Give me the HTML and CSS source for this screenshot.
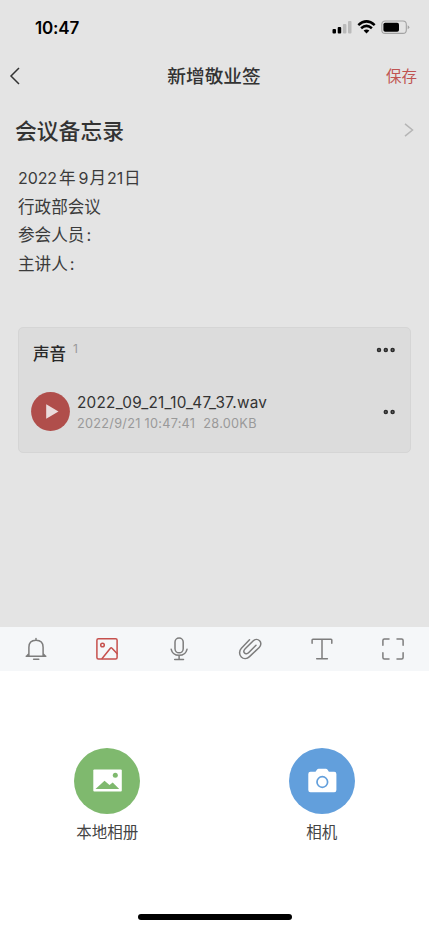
FILE: index.html
```html
<!DOCTYPE html>
<html lang="zh-CN">
<head>
<meta charset="utf-8">
<meta name="viewport" content="width=device-width, initial-scale=1">
<title>新增敬业签</title>
<link rel="stylesheet" href="styles.css">
</head>
<body>
<div class="phone">
  <main class="editor">
    <div class="status">
      <span class="time">10:47</span>
      <svg class="signals" width="78" height="16" viewBox="0 0 78 16">
        <rect x="0.5" y="9" width="3.5" height="4.5" rx="1"/>
        <rect x="5.7" y="7" width="3.5" height="6.5" rx="1"/>
        <rect x="10.9" y="4" width="3.5" height="9.5" rx="1" fill="#bababa"/>
        <rect x="16" y="1" width="3.5" height="12.5" rx="1" fill="#bababa"/>
        <g fill="none" stroke="#000" stroke-width="2.5">
          <path d="M26.3 5.1Q34.5 -2.3 42.7 5.1"/>
          <path d="M29.1 8.3Q34.5 3.5 39.9 8.3"/>
        </g>
        <path d="M31.6 10.6Q34.5 8.2 37.4 10.6L34.5 13.6Z"/>
        <rect x="49.8" y="1" width="24.5" height="12.4" rx="3.4" fill="none" stroke="#a2a2a2" stroke-width="1.1"/>
        <rect x="51.4" y="2.7" width="15.6" height="9" rx="1.8"/>
        <path d="M75.7 5.2Q79 7.2 75.7 9.2Z" fill="#a2a2a2"/>
      </svg>
    </div>
    <header class="nav">
      <svg class="back" width="12" height="18" viewBox="0 0 12 18"><path d="M10 1L2 9l8 8"/></svg>
      <h1>新增敬业签</h1>
      <span class="save">保存</span>
    </header>
    <div class="subject">
      <h2>会议备忘录</h2>
      <svg class="more" width="10" height="14" viewBox="0 0 10 14"><path d="M1 .8L8.5 7 1 13.2"/></svg>
    </div>
    <div class="note">
      <p><span class="num">2022</span><span class="year">年</span><span class="num">9</span><span class="month">月</span><span class="num">21</span><span class="day">日</span></p>
      <p>行政部会议</p>
      <p>参会人员<span class="colon">:</span></p>
      <p>主讲人<span class="colon">:</span></p>
    </div>
    <section class="card">
      <div class="card-head">
        <h3>声音</h3><span class="count">1</span>
        <svg class="dots" width="20" height="6" viewBox="0 0 20 6"><circle cx="3" cy="3" r="1.5"/><circle cx="9.8" cy="3" r="1.5"/><circle cx="16.6" cy="3" r="1.5"/></svg>
      </div>
      <div class="file">
        <svg class="play" width="39" height="39" viewBox="0 0 39 39"><circle cx="19.5" cy="19.5" r="19.4" fill="#b04e4b"/><path d="M15.2 12.2v14.6l12.3-7.3z" fill="#eadcdc"/></svg>
        <div class="meta">
          <div class="name">2022_09_21_10_47_37.wav</div>
          <div class="info"><span>2022/9/21 10:47:41</span><span>28.00KB</span></div>
        </div>
        <svg class="dots" width="20" height="6" viewBox="0 0 20 6"><circle cx="9.8" cy="3" r="1.5"/><circle cx="16.6" cy="3" r="1.5"/></svg>
      </div>
    </section>
  </main>
  <nav class="tools">
    <svg viewBox="0 0 24 24"><path d="M2.2 19.3h19.6M4.9 19V10.2Q4.9 3.2 12 3.2t7.1 7V19M12 3.2V1.5M4.9 16.8L2.5 19.3M19.1 16.8l2.4 2.5M9.6 22.2h5.2"/></svg>
    <svg class="active" viewBox="0 0 24 24"><rect x="1.9" y="1.8" width="20.2" height="20.2" rx="1.5"/><circle cx="7.5" cy="8" r="1.8"/><path d="M7.1 21.5l8.3-10.3q.8-.8 1.6 0l5 5.4"/></svg>
    <svg viewBox="0 0 24 24"><rect x="8" y="1" width="8.2" height="14.8" rx="4.1"/><path d="M4.2 12.3q1.4 6 7.9 6t7.9-6M12.1 18.3v4M7.7 22.4h8.8"/></svg>
    <svg viewBox="0 0 24 24"><path d="M11.5 2.8L3.4 11.3C1 13.8 1 17.8 3.3 20s5.8 1.9 8.2-.4L21.2 10.500c2-1.900 2.200-5 .4-6.800s-4.500-1.700-6.300.1L7.200 11.800c-1.500 1.500-1.700 3.200-.7 4.300s2.800.9 4.300-.6l7.200-7.200"/></svg>
    <svg viewBox="0 0 24 24"><path d="M2.1 6.2V3Q2.1 2.2 2.9 2.2H21Q21.8 2.2 21.8 3V6.2M12 2.2V21.8M6.7 21.8h10.7"/></svg>
    <svg viewBox="0 0 24 24"><path d="M1.9 8.2V3.5Q1.9 2 3.4 2H8M16 2h4.6Q22.1 2 22.1 3.5V8.2M22.1 15.8v4.6Q22.1 21.9 20.6 21.9H16M8 21.9H3.4Q1.9 21.9 1.9 20.4V15.8"/></svg>
  </nav>
  <section class="sources">
    <div class="source">
      <svg width="66" height="66" viewBox="0 0 66 66"><circle cx="33" cy="33" r="33" fill="#7fb96e"/><rect x="19.3" y="21.5" width="28.5" height="22" rx="1" fill="#fff"/><circle cx="41.3" cy="27.3" r="2.5" fill="#7fb96e"/><path d="M21.5 41l9-8.2 5 4.3 3.2-2.7 6.5 6.6z" fill="#7fb96e"/></svg>
      <span>本地相册</span>
    </div>
    <div class="source">
      <svg width="66" height="66" viewBox="0 0 66 66"><circle cx="33" cy="33" r="33" fill="#629fdc"/><path d="M21.5 23.7h5l1.6-2.2q.6-.8 1.5-.8h7.3q.9 0 1.5.8l1.5 2.2h5.3q2.2 0 2.2 2.2v16.2q0 2.2-2.2 2.2H21.5q-2.2 0-2.2-2.2V25.9q0-2.2 2.2-2.2z" fill="#fff"/><circle cx="33.3" cy="34" r="5.3" fill="#fff" stroke="#629fdc" stroke-width="1.7"/></svg>
      <span>相机</span>
    </div>
  </section>
  <div class="home"></div>
</div>
</body>
</html>
```
FILE: styles.css
```css
* { box-sizing: border-box; }
body { margin: 0; background: #fff; font-family: Inter, "Noto Sans CJK SC", sans-serif; color: #333; }
h1, h2, h3, p { margin: 0; }
svg { display: block; flex: none; }
.phone { width: 429px; height: 930px; display: flex; flex-direction: column; overflow: hidden; }
.editor { height: 627px; background: #e4e4e4; flex: none; }
.status { height: 52px; display: flex; justify-content: space-between; align-items: center; padding: 3px 19px 0 35px; color: #000; }
.time { font-size: 17px; font-weight: 600; letter-spacing: -.15px; line-height: 20px; }
.nav { height: 48px; display: grid; grid-template-columns: 60px 1fr 60px; align-items: center; padding: 0 12px 0 9px; }
.back { fill: none; stroke: #333; stroke-width: 1.5; }
h1 { font-size: 18.7px; font-weight: 500; text-align: center; line-height: 28px; white-space: nowrap; padding: 2px 0 0 2px; }
.save { color: #c05452; font-size: 15.5px; text-align: right; line-height: 22px; padding-top: 2px; }
.subject { height: 60px; display: flex; align-items: center; justify-content: space-between; padding: 0 15px; }
h2 { font-size: 21.8px; font-weight: 500; line-height: 32px; padding-top: 1px; }
.more { fill: none; stroke: #b5b5b5; stroke-width: 1.5; }
.note { padding: 4px 18px 0; font-size: 16.6px; color: #3b3b3b; height: 167px; }
.note p { height: 28.7px; line-height: 28.7px; display: flex; }
.num { font-size: 16px; letter-spacing: -.1px; }
.year { margin: 0 3px 0 2px; }
.month { margin: 0 1px; }
.day { margin-left: 1px; }
.colon { margin-left: 2px; }
.card { margin: 0 18px; height: 126px; border: 1px solid #d5d5d5; border-radius: 5px; background: #dcdcdc; padding: 0 14px 0 12px; }
.card-head { height: 51px; display: flex; align-items: center; padding-left: 2px; }
h3 { font-size: 16.5px; font-weight: 500; color: #292929; line-height: 24px; }
.count { font-size: 12px; color: #999; margin: -10px auto 0 7px; }
.card-head .dots { margin-top: -7px; }
.dots { fill: #777; stroke: #2b2b2b; stroke-width: 1.5; }
.file { height: 65px; display: flex; align-items: center; }
.meta { flex: 1; padding: 3px 0 0 7px; white-space: nowrap; }
.name { font-size: 15.3px; line-height: 22px; letter-spacing: .27px; }
.info { font-size: 12.7px; line-height: 20px; letter-spacing: .28px; color: #999; display: flex; gap: 8px; }
.tools { height: 44px; flex: none; background: #f5f7f9; display: grid; grid-template-columns: repeat(6, 1fr); align-items: center; justify-items: center; }
.tools svg { width: 24px; height: 24px; fill: none; stroke: #7d7d7d; stroke-width: 1.5; stroke-linecap: round; stroke-linejoin: round; }
.tools .active { stroke: #c6504d; }
.sources { height: 240px; flex: none; display: grid; grid-template-columns: 1fr 1fr; padding-top: 77px; justify-items: center; }
.source { display: flex; flex-direction: column; align-items: center; gap: 8px; font-size: 15.5px; line-height: 22px; color: #444; }
.home { width: 154px; height: 6px; border-radius: 3px; background: #000; margin: 3px auto 0; }
```
